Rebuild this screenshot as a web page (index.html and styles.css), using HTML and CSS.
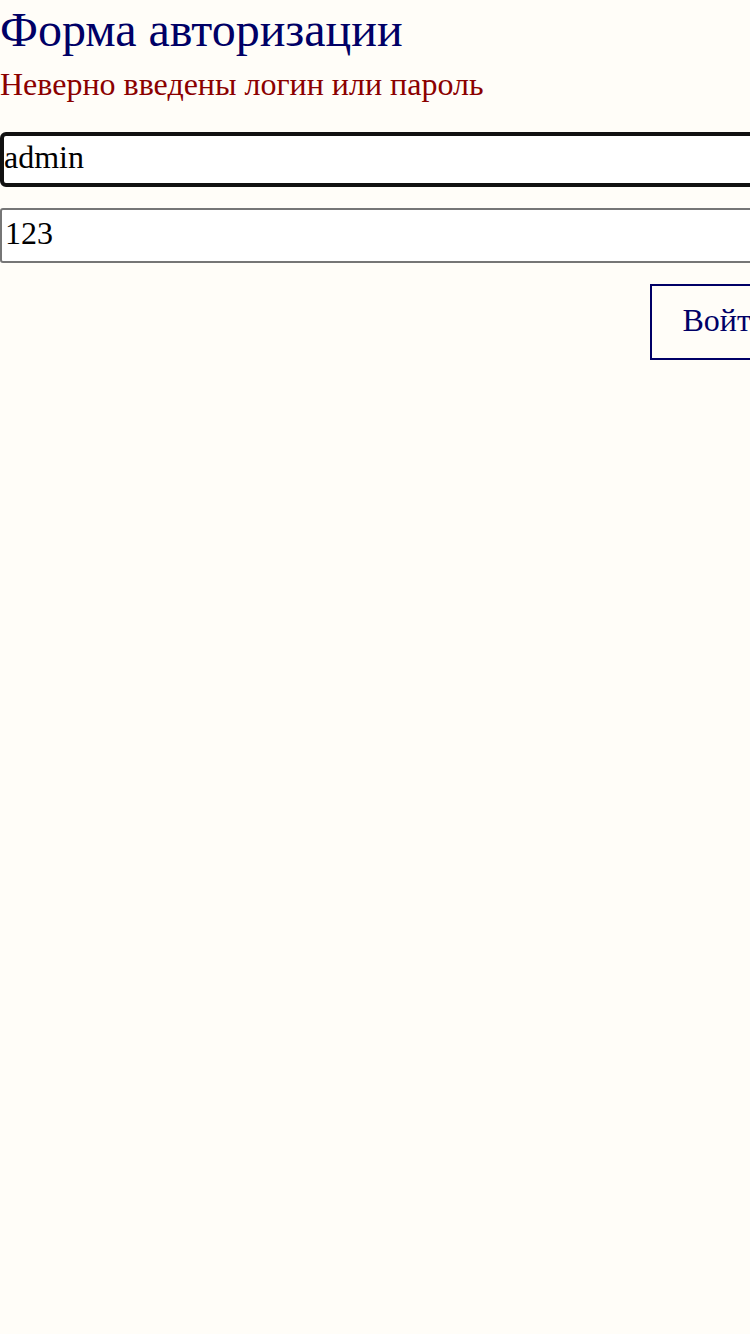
FILE: index.html
```html
<!DOCTYPE html>
<html lang="ru">
<head>
<meta charset="utf-8">
<title>Форма авторизации</title>
<link rel="stylesheet" href="styles.css">
</head>
<body>
<form class="auth">
  <h1 class="auth-title">Форма авторизации</h1>
  <p class="auth-error">Неверно введены логин или пароль</p>
  <input class="field field-focus" type="text" value="admin">
  <input class="field" type="text" value="123">
  <div class="actions">
    <button class="btn" type="button">Войти</button>
  </div>
</form>
</body>
</html>
```

FILE: styles.css
```css
html, body {
  margin: 0;
  padding: 0;
  background: #fffdf8;
  font-family: "Liberation Serif", "Times New Roman", serif;
}
.auth {
  width: 800px;
  display: flex;
  flex-direction: column;
}
.auth-title {
  margin: 0;
  font-weight: normal;
  font-size: 48px;
  line-height: 60px;
  color: #000066;
}
.auth-error {
  margin: 0;
  font-size: 32px;
  line-height: 48px;
  color: #8b0000;
}
.field {
  box-sizing: border-box;
  width: 100%;
  height: 55px;
  margin: 0 0 21px 0;
  padding: 0 3px 4px 3px;
  font-family: "Liberation Serif", serif;
  font-size: 32px;
  color: #000;
  background: #fff;
  border: 2px solid #767676;
  border-radius: 3px;
  outline: none;
}
.field-focus {
  border: 4px solid #111;
  border-radius: 6px;
  padding: 0 1px 4px 0;
  margin-top: 24px;
}
.actions {
  display: flex;
  justify-content: flex-end;
}
.btn {
  box-sizing: border-box;
  height: 76px;
  padding: 0 30px 4px 30px;
  font-family: "Liberation Serif", serif;
  font-size: 32px;
  color: #000066;
  background: transparent;
  border: 2px solid #000066;
  border-radius: 0;
}
```
